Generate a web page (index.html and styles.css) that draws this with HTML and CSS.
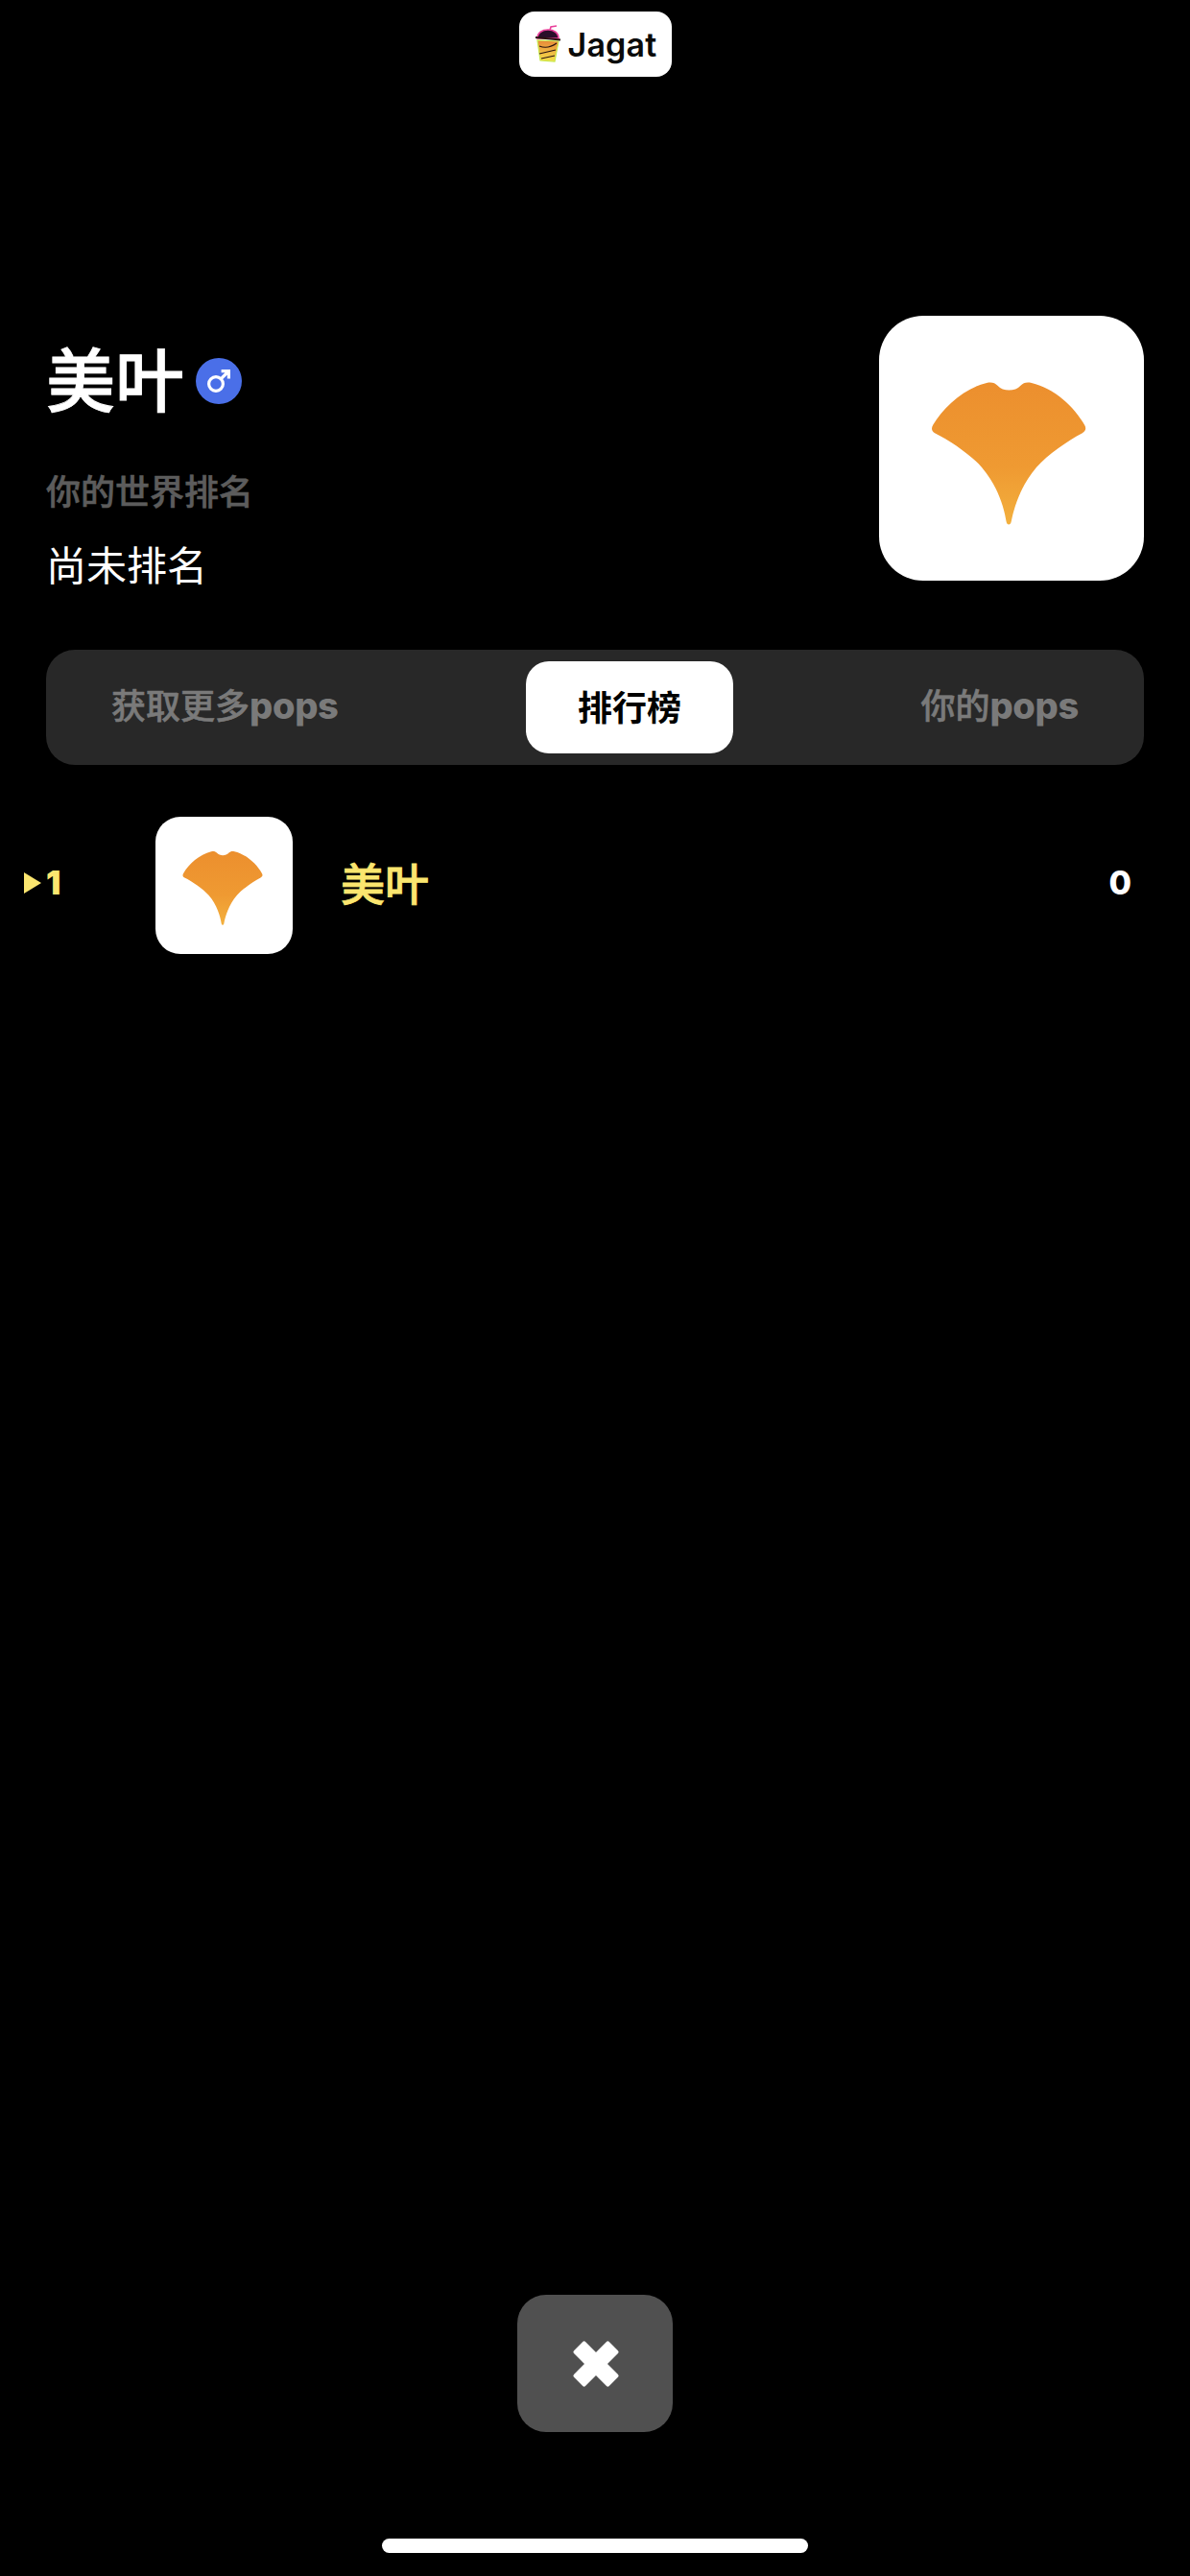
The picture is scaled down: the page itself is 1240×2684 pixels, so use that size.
FILE: index.html
```html
<!DOCTYPE html>
<html lang="zh">

<head>
    <meta charset="UTF-8" />
    <title>排行榜</title>
    <link rel="stylesheet" href="styles.css">
</head>

<body>

    <svg class="defs" width="0" height="0">
        <defs>
            <linearGradient id="leafFill" x1="0" y1="0" x2="0" y2="1">
                <stop offset="0" stop-color="#ec8f2e" />
                <stop offset="0.6" stop-color="#ef9a32" />
                <stop offset="1" stop-color="#f3b03e" />
            </linearGradient>
            <linearGradient id="cupFill" x1="0" y1="0" x2="0" y2="1">
                <stop offset="0" stop-color="#e8883a" />
                <stop offset="1" stop-color="#f5e04a" />
            </linearGradient>
            <symbol id="leaf" viewBox="0 0 825 825">
                <path fill="url(#leafFill)"
                    d="M396 640 C390 600 370 530 320 472 C285 432 220 388 175 366 C163 360 162 350 168 340 C200 285 265 225 335 209 C350 206 360 208 370 218 C385 236 425 236 440 218 C450 208 460 206 475 209 C545 225 610 285 640 340 C646 350 644 360 632 366 C590 388 525 432 490 472 C440 530 420 600 412 640 C410 654 398 654 396 640 Z" />
            </symbol>
        </defs>
    </svg>

    <!-- Marca superior -->
    <div class="brand">
        <svg class="brand-logo" width="28" height="40" viewBox="0 0 28 40">
            <path d="M15 9 L17 2 L23 1" fill="none" stroke="#e8409a" stroke-width="1.6" />
            <path d="M3 14 C3 8 8 5 14 5 C20 5 25 8 25 14 Z" fill="#2a0f2a" stroke="#e8409a" stroke-width="1.6" />
            <path d="M3 16 L6 37 L21 38 L25 17 Z" fill="url(#cupFill)" stroke="#c8e84a" stroke-width="1.2" />
            <path d="M1 13 L27 15.5" stroke="#2a1410" stroke-width="2.2" />
            <path d="M5 30 L22 26 M7 35 L21 32" stroke="#2a1410" stroke-width="1.1" />
            <path d="M5 22 C10 24 16 24 23 19" fill="none" stroke="#2a1410" stroke-width="1.1" />
        </svg>
        <span class="brand-name">Jagat</span>
    </div>

    <!-- Cabecera -->
    <section class="hero">
        <div class="hero-text">
            <div class="name-row">
                <h1 class="name">美叶</h1>
                <span class="gender">
                    <svg width="30" height="30" viewBox="0 0 30 30" fill="none" stroke="#fff" stroke-width="3.2">
                        <circle cx="12" cy="18" r="7.4" />
                        <path d="M17.4 12.6 L25 5 M17.6 4.6 H25.4 V12.4" />
                    </svg>
                </span>
            </div>
            <div class="rank-label">你的世界排名</div>
            <div class="rank-value">尚未排名</div>
        </div>
        <div class="avatar avatar-big">
            <svg width="276" height="276"><use href="#leaf" /></svg>
        </div>
    </section>

    <!-- Pestañas -->
    <nav class="tabs">
        <span class="tab">获取更多<b>pops</b></span>
        <span class="tab active">排行榜</span>
        <span class="tab">你的<b>pops</b></span>
    </nav>

    <!-- Fila del ranking -->
    <div class="row">
        <div class="pos"><i class="pos-arrow"></i>1</div>
        <div class="avatar avatar-small">
            <svg width="143" height="143"><use href="#leaf" /></svg>
        </div>
        <div class="row-name">美叶</div>
        <div class="score">0</div>
    </div>

    <!-- Parte inferior -->
    <button class="close">
        <svg width="50" height="50" viewBox="0 0 50 50" fill="#fff">
            <rect x="-1" y="16.5" width="52" height="17" rx="2" transform="rotate(45 25 25)" />
            <rect x="-1" y="16.5" width="52" height="17" rx="2" transform="rotate(-45 25 25)" />
        </svg>
    </button>
    <div class="home-bar"></div>

</body>

</html>
```

FILE: styles.css
```css
* {
    box-sizing: border-box;
}

body {
    background: #000;
    color: #fff;
    font-family: "Noto Sans CJK SC", "Noto Sans", sans-serif;
    width: 1240px;
    height: 2684px;
    margin: 0;
    overflow: hidden;
    display: flex;
    flex-direction: column;
}

.defs {
    position: absolute;
}

.brand {
    align-self: center;
    width: 159px;
    height: 68px;
    margin-top: 12px;
    background: #fff;
    border-radius: 16px;
    display: flex;
    align-items: center;
    justify-content: center;
    gap: 6px;
}

.brand-logo {
    margin-left: 2px;
}

.brand-name {
    color: #0a0a0a;
    font-family: Inter, sans-serif;
    font-weight: 600;
    font-size: 34px;
    letter-spacing: 0.2px;
}

.hero {
    display: flex;
    justify-content: space-between;
    padding: 0 48px;
    margin-top: 249px;
}

.hero-text {
    display: flex;
    flex-direction: column;
}

.name-row {
    display: flex;
    align-items: center;
    gap: 12px;
    margin-top: 19px;
}

.name {
    margin: 0;
    font-size: 72px;
    font-weight: 500;
    -webkit-text-stroke: 0.9px #fff;
    line-height: 88px;
}

.gender {
    width: 48px;
    height: 48px;
    margin-top: 10px;
    border-radius: 50%;
    background: #4a6fe8;
    display: flex;
    align-items: center;
    justify-content: center;
}

.rank-label {
    margin-top: 52px;
    color: #5c5c5c;
    font-size: 36px;
    font-weight: 500;
    -webkit-text-stroke: 0.6px #5c5c5c;
    line-height: 44px;
}

.rank-value {
    margin-top: 37px;
    font-size: 42px;
    line-height: 36px;
}

.avatar {
    background: #fff;
    flex-shrink: 0;
    overflow: hidden;
}

.avatar svg {
    display: block;
}

.avatar-big {
    width: 276px;
    height: 276px;
    border-radius: 46px;
}

.avatar-small {
    width: 143px;
    height: 143px;
    border-radius: 26px;
}

.tabs {
    margin: 72px 48px 0;
    height: 120px;
    padding: 12px 68px;
    background: #282828;
    border-radius: 30px;
    display: flex;
    align-items: center;
    justify-content: space-between;
}

.tab {
    color: #7a7a7a;
    margin-bottom: 6px;
    font-size: 36px;
    font-weight: 500;
    -webkit-text-stroke: 0.6px #7a7a7a;
    line-height: 44px;
}

.tab b {
    font-family: Inter, sans-serif;
    font-size: 38px;
    font-weight: 800;
    letter-spacing: -0.3px;
    -webkit-text-stroke: 0;
}

.tab.active {
    width: 216px;
    height: 96px;
    margin-bottom: 0;
    padding-bottom: 4px;
    background: #fff;
    color: #000;
    font-weight: 700;
    -webkit-text-stroke: 0;
    border-radius: 24px;
    display: flex;
    align-items: center;
    justify-content: center;
}

.row {
    margin-top: 54px;
    padding: 0 61px 0 25px;
    display: flex;
    align-items: center;
    color: #fbe66f;
}

.pos {
    width: 137px;
    margin-bottom: 6px;
    display: flex;
    align-items: center;
    gap: 5px;
    font-family: Inter, sans-serif;
    font-weight: 900;
    font-size: 34px;
}

.pos-arrow {
    width: 0;
    height: 0;
    border-left: 18px solid #fbe66f;
    border-top: 11px solid transparent;
    border-bottom: 11px solid transparent;
}

.row-name {
    margin-left: 50px;
    margin-bottom: 10px;
    font-size: 46px;
    font-weight: 500;
    -webkit-text-stroke: 0.8px #fbe66f;
}

.score {
    margin-left: auto;
    margin-bottom: 6px;
    color: #fff;
    font-family: Inter, sans-serif;
    font-weight: 800;
    font-size: 34px;
}

.close {
    align-self: center;
    margin-top: auto;
    width: 162px;
    height: 143px;
    padding: 0 0 0 2px;
    border: 0;
    background: #505050;
    border-radius: 30px;
    display: flex;
    align-items: center;
    justify-content: center;
}

.home-bar {
    align-self: center;
    width: 444px;
    height: 15px;
    margin-top: 111px;
    margin-bottom: 24px;
    background: #fff;
    border-radius: 8px;
}
```
